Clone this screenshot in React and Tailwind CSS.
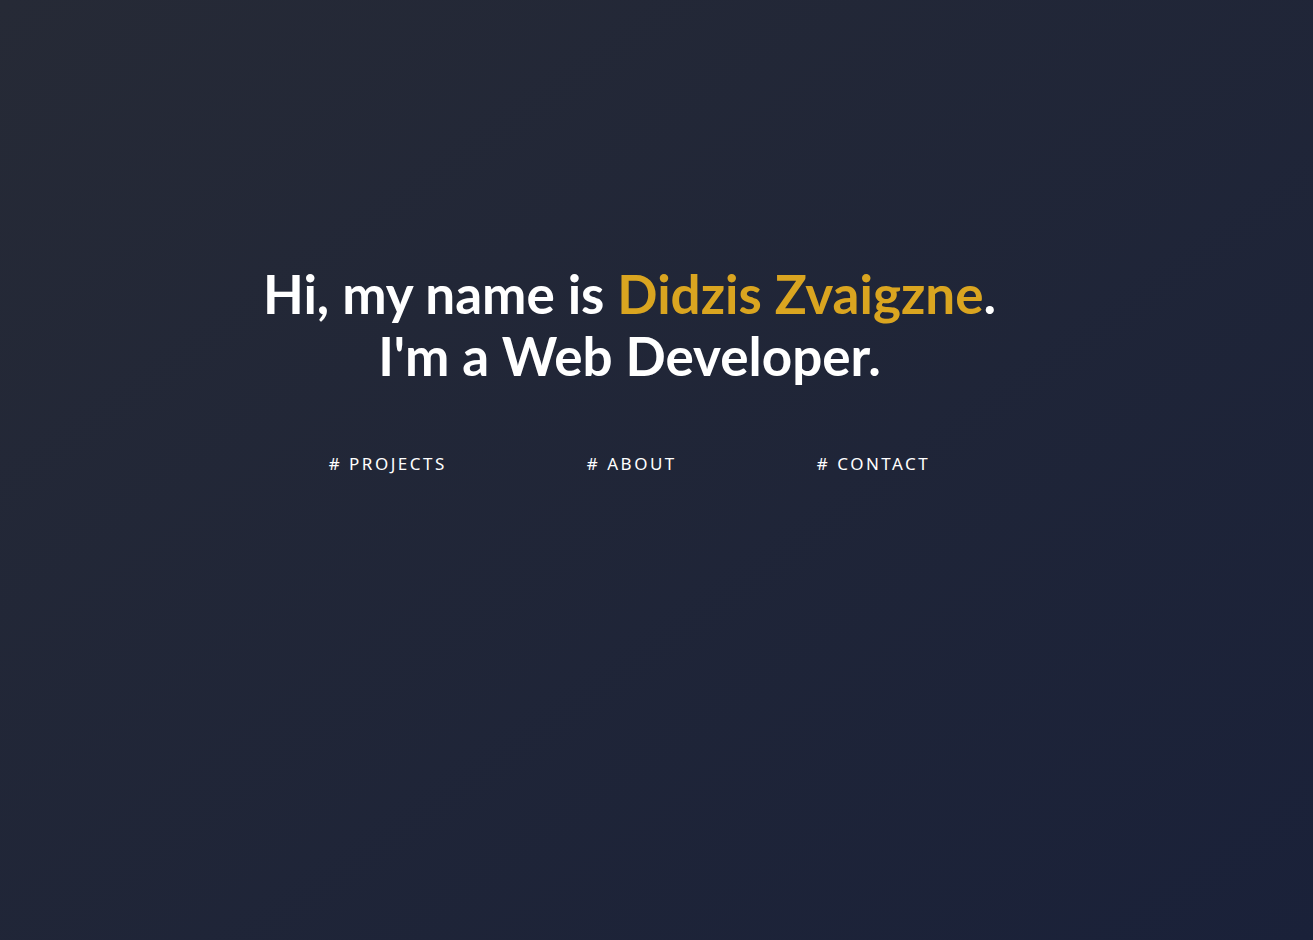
import React from 'react';

const links = ['PROJECTS', 'ABOUT', 'CONTACT'];

const App = () => {
  return (
    <div className="min-h-[940px] w-full bg-gradient-to-br from-[#262a36] to-[#1a2139] flex flex-col items-center pt-[263px] pr-[54px]">
      {/* Intro */}
      <h1 className="text-center text-white font-bold text-[53px] leading-[62px] font-['Lato','Noto_Sans',sans-serif]">
        Hi, my name is <span className="text-[#daa520]">Didzis Zvaigzne</span>.
        <br />
        I'm a Web Developer.
      </h1>

      {/* Navigation */}
      <nav className="mt-[64px] flex items-center gap-[140px] font-['Noto_Sans','Open_Sans',sans-serif] text-white text-[17px] tracking-[2.5px]">
        {links.map((link) => (
          <a key={link} href="#" className="hover:text-[#daa520] transition">
            # {link}
          </a>
        ))}
      </nav>
    </div>
  );
};

export default App;
